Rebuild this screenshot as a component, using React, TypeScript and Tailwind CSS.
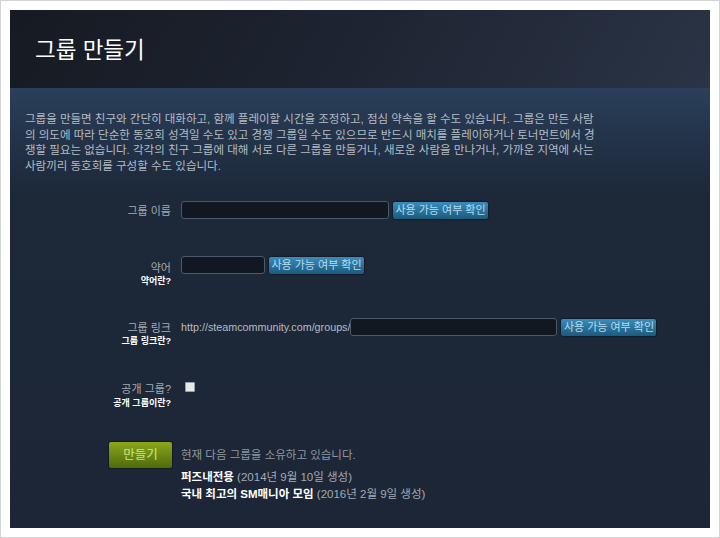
import React from "react";

const F = { fontFamily: '"Liberation Sans", "Noto Sans CJK KR", sans-serif' };

function CheckBtn() {
  return (
    <button className="h-[17px] w-[95px] rounded-[2px] bg-[linear-gradient(to_bottom,#3b8cba,#1c5a7d)] text-[11px] leading-[17px] text-[#b4dcf2] shadow-[0_0_2px_#000]">
      사용 가능 여부 확인
    </button>
  );
}

function Input({ w }: { w: string }) {
  return <div className={`${w} h-[18px] rounded-[3px] border border-[#4a5a6b] bg-[#121821]`} />;
}

export default function App() {
  return (
    <div style={F} className="h-[538px] w-[720px] border border-[#d4d4d4] bg-white p-[9px]">
      <div className="flex h-full flex-col bg-[#1c2637]">
        <div className="flex h-[78px] items-center bg-[linear-gradient(120deg,#161a22_0%,#1d2330_45%,#2a3446_100%)] pl-[25px] pt-[4px]">
          <h1 className="text-[22.5px] leading-none text-white">그룹 만들기</h1>
        </div>
        <div className="flex-1 bg-[linear-gradient(to_bottom,#2b3f5b_0px,#233349_50px,#1d2839_110px,#1c2637_100%)]">
          <div className="pl-[15px] pt-[24px] text-[11.5px] leading-[15.5px] text-[#b4bcc4]">
            <div className="whitespace-nowrap">그룹을 만들면 친구와 간단히 대화하고, 함께 플레이할 시간을 조정하고, 점심 약속을 할 수도 있습니다. 그룹은 만든 사람</div>
            <div className="whitespace-nowrap">의 의도에 따라 단순한 동호회 성격일 수도 있고 경쟁 그룹일 수도 있으므로 반드시 매치를 플레이하거나 토너먼트에서 경</div>
            <div className="whitespace-nowrap">쟁할 필요는 없습니다. 각각의 친구 그룹에 대해 서로 다른 그룹을 만들거나, 새로운 사람을 만나거나, 가까운 지역에 사는</div>
            <div className="whitespace-nowrap">사람끼리 동호회를 구성할 수도 있습니다.</div>
          </div>

          <div className="mt-[27px] flex flex-col text-[11px]">
            {/* row 1 */}
            <div className="flex h-[55px] items-start">
              <div className="w-[162px] pr-[1px] pt-[3px] text-right leading-[14px] text-[#a3abb2]">그룹 이름</div>
              <div className="ml-[9px] flex items-start gap-[4px]">
                <Input w="w-[208px]" />
                <div className="mt-[1px]"><CheckBtn /></div>
              </div>
            </div>
            {/* row 2 */}
            <div className="flex h-[62px] items-start">
              <div className="w-[162px] pr-[1px] pt-[5px] text-right leading-[14px]">
                <div className="text-[#a3abb2]">약어</div>
                <div className="text-[9px] font-bold leading-[12px] text-white">약어란?</div>
              </div>
              <div className="ml-[9px] flex items-start gap-[4px]">
                <Input w="w-[84px]" />
                <div className="mt-[1px]"><CheckBtn /></div>
              </div>
            </div>
            {/* row 3 */}
            <div className="flex h-[64px] items-start">
              <div className="w-[162px] pr-[1px] pt-[3px] text-right leading-[14px]">
                <div className="text-[#a3abb2]">그룹 링크</div>
                <div className="text-[9px] font-bold leading-[12px] text-white">그룹 링크란?</div>
              </div>
              <div className="ml-[9px] flex items-start">
                <span className="pt-[2px] text-[10.75px] leading-[14px] text-[#b4bcc4]">http://steamcommunity.com/groups/</span>
                <Input w="w-[207px]" />
                <div className="ml-[4px] mt-[1px]"><CheckBtn /></div>
              </div>
            </div>
            {/* row 4 */}
            <div className="flex h-[60px] items-start">
              <div className="w-[162px] pr-[1px] pt-[0px] text-right leading-[14px]">
                <div className="text-[#a3abb2]">공개 그룹?</div>
                <div className="text-[9px] font-bold leading-[14px] text-white">공개 그룹이란?</div>
              </div>
              <div className="ml-[13px]">
                <div className="h-[10px] w-[10px] rounded-[1px] border border-[#9aa0a6] bg-[#e8e8e8]" />
              </div>
            </div>
            {/* row 5 */}
            <div className="flex items-start">
              <div className="flex w-[162px] justify-end">
                <button className="h-[26px] w-[63px] rounded-[2px] bg-[linear-gradient(to_bottom,#8aa81c,#4e6a0b)] text-[12.5px] text-[#cfe58a] shadow-[0_0_2px_#000]">
                  만들기
                </button>
              </div>
              <div className="ml-[9px] pt-[5px] text-[11.5px] leading-[17px]">
                <div className="text-[#8f98a0]">현재 다음 그룹을 소유하고 있습니다.</div>
                <div className="mt-[5px]">
                  <span className="font-semibold text-white">퍼즈내전용</span>{" "}
                  <span className="text-[#a3abb2]">(2014년 9월 10일 생성)</span>
                </div>
                <div>
                  <span className="font-semibold text-white">국내 최고의 SM매니아 모임</span>{" "}
                  <span className="text-[#a3abb2]">(2016년 2월 9일 생성)</span>
                </div>
              </div>
            </div>
          </div>
        </div>
      </div>
    </div>
  );
}
